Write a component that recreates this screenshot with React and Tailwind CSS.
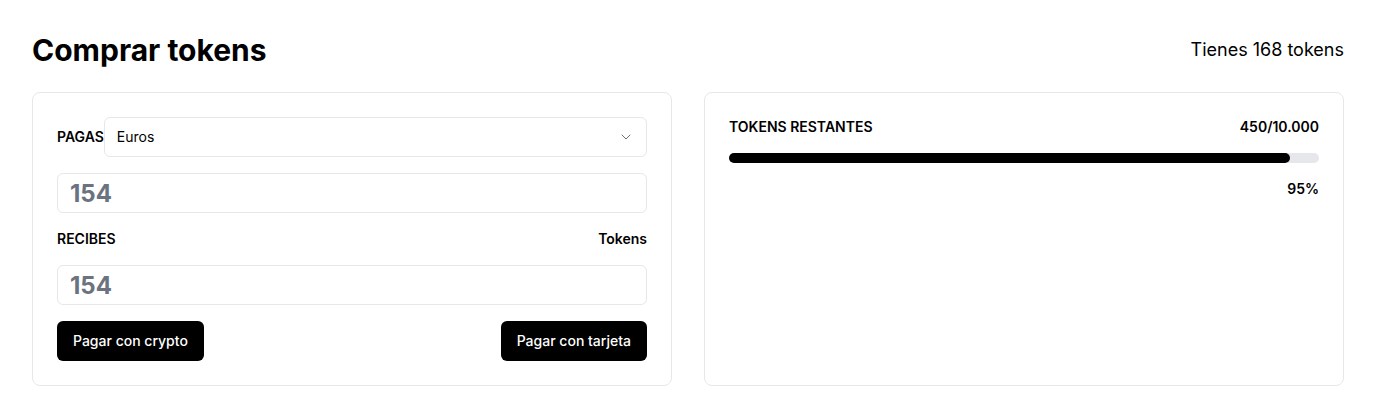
import React from "react"
import { ChevronDown } from "lucide-react"

const Field = ({ value }) => (
  <div className="h-10 w-full rounded-md border border-gray-200 bg-white px-3 flex items-center">
    <span className="pt-0.5 text-2xl font-bold text-[#6b7280]">{value}</span>
  </div>
)

const Button = ({ children }) => (
  <button className="h-10 rounded-md bg-black px-4 text-sm font-medium text-white">{children}</button>
)

export default function App() {
  const used = 95

  return (
    <div className="min-h-screen bg-white px-8 pt-8 text-black" style={{ fontFamily: "Inter, 'Noto Sans', sans-serif" }}>
      <div className="mb-6 flex items-center justify-between">
        <h1 className="text-3xl font-bold">Comprar tokens</h1>
        <span className="text-lg">Tienes 168 tokens</span>
      </div>

      <div className="grid grid-cols-2 gap-8">
        {/* Compra */}
        <div className="rounded-lg border border-gray-200 p-6">
          <div className="flex flex-col gap-4">
            <div className="flex items-center">
              <span className="text-sm font-semibold">PAGAS</span>
              <div className="flex h-10 flex-1 items-center justify-between rounded-md border border-gray-200 px-3">
                <span className="text-sm">Euros</span>
                <ChevronDown className="h-4 w-4 text-gray-500" strokeWidth={1.5} />
              </div>
            </div>
            <Field value="154" />
            <div className="flex items-center justify-between text-sm font-semibold">
              <span>RECIBES</span>
              <span>Tokens</span>
            </div>
            <Field value="154" />
            <div className="flex justify-between">
              <Button>Pagar con crypto</Button>
              <Button>Pagar con tarjeta</Button>
            </div>
          </div>
        </div>

        {/* Restantes */}
        <div className="rounded-lg border border-gray-200 p-6">
          <div className="flex items-center justify-between text-sm font-semibold">
            <span>TOKENS RESTANTES</span>
            <span>450/10.000</span>
          </div>
          <div className="mt-4 h-2.5 w-full rounded-full bg-gray-200">
            <div className="h-2.5 rounded-full bg-black" style={{ width: `${used}%` }} />
          </div>
          <div className="mt-4 text-right text-sm font-semibold">{used}%</div>
        </div>
      </div>
    </div>
  )
}
